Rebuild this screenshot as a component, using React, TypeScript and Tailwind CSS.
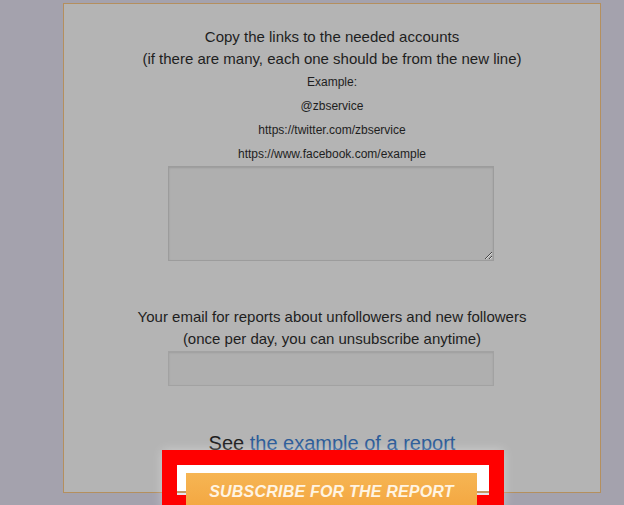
import React from 'react';

const exampleLines = ['Example:', '@zbservice', 'https://twitter.com/zbservice', 'https://www.facebook.com/example'];

const App: React.FC = () => {
  return (
    <div
      className="relative w-[624px] h-[505px] overflow-hidden bg-[#a4a2ad] text-[#1e1e1e]"
      style={{ fontFamily: '"Liberation Sans", Arial, sans-serif' }}
    >
      {/* Form panel */}
      <div className="ml-[63px] mt-[3px] w-[538px] h-[490px] border-[1.5px] border-[#b48f5e] bg-[#b4b4b4] flex flex-col items-center pt-[22px]">
        <div className="text-[15px] leading-[22px] text-center">
          <p>Copy the links to the needed accounts</p>
          <p>(if there are many, each one should be from the new line)</p>
        </div>
        <div className="text-[12px] leading-[24px] text-center">
          {exampleLines.map((line) => (
            <p key={line}>{line}</p>
          ))}
        </div>
        <textarea
          className="w-[326px] h-[95px] ml-[-2px] border border-[#9c9c9c] bg-[#afafaf] shadow-[inset_0_1px_2px_rgba(0,0,0,0.12)] resize-y outline-none"
          readOnly
        />

        <div className="mt-[45px] text-[15px] leading-[22px] text-center">
          <p>Your email for reports about unfollowers and new followers</p>
          <p>(once per day, you can unsubscribe anytime)</p>
        </div>
        <input
          type="text"
          readOnly
          className="mt-px w-[326px] h-[35px] ml-[-2px] border border-[#a2a2a2] bg-[#afafaf] shadow-[inset_0_1px_2px_rgba(0,0,0,0.1)] outline-none"
        />

        <p className="mt-[44px] text-[20px] leading-[26px]">
          See <a className="text-[#2a5b98]">the example of a report</a>
        </p>
      </div>

      {/* Highlighted subscribe button */}
      <div className="absolute left-[162px] top-[450px] w-[342px] h-[60px] border-[15px] border-[#ff0000] bg-white shadow-[0_0_10px_rgba(255,255,255,0.35)]">
        <div className="absolute left-0 right-0 top-[26px] h-[1.5px] bg-[#c29a68]" />
        <div className="absolute left-0 right-0 top-[28px] bottom-0 bg-[#e6e4ec]" />
        <button className="relative ml-[9px] mt-[8px] w-[291px] h-[40px] bg-gradient-to-b from-[#f6b553] to-[#f3a53e] text-[#fff4e2] text-[16px] font-bold italic tracking-[0.2px] pb-[2px]">
          SUBSCRIBE FOR THE REPORT
        </button>
      </div>
    </div>
  );
};

export default App;
